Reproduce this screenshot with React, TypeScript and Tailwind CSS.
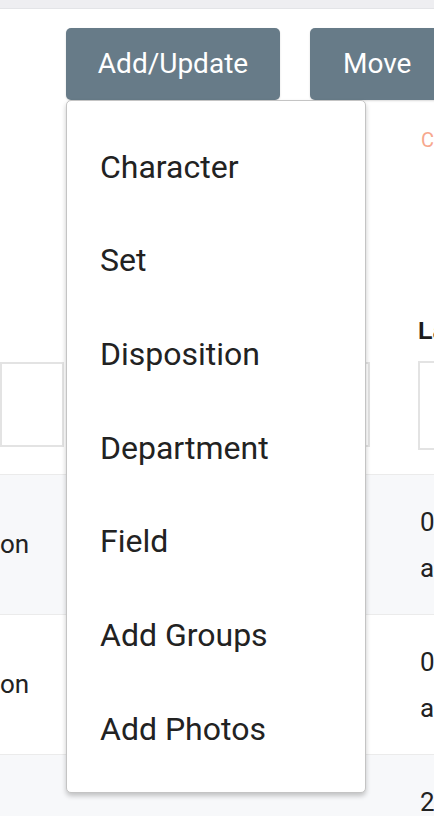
import React from 'react'

const MENU_ITEMS = ['Character', 'Set', 'Disposition', 'Department', 'Field', 'Add Groups', 'Add Photos']

const ROWS = [
  { left: 'on', right: ['0', 'a'], shaded: true },
  { left: 'on', right: ['0', 'a'], shaded: false },
  { left: '', right: ['2', ''], shaded: true },
]

function FilterInput({ className = '' }: { className?: string }) {
  return <div className={`border-2 border-[#e3e3e3] bg-white ${className}`} />
}

function AddUpdateMenu() {
  return (
    <div className="absolute left-[66px] top-[100px] z-10 w-[300px] rounded-[5px] border border-[#c4c4c4] bg-white pt-[19px] pb-[16px] shadow-[0_3px_5px_rgba(0,0,0,0.22)]">
      <ul className="flex flex-col">
        {MENU_ITEMS.map((item) => (
          <li key={item} className="flex h-[93.67px] items-center pl-[33px] text-[32px] text-[#222]">
            {item}
          </li>
        ))}
      </ul>
    </div>
  )
}

export default function App() {
  return (
    <div className="relative h-[816px] w-[434px] overflow-hidden bg-white font-['Roboto',sans-serif]">
      <div className="h-[9px] border-b border-[#e3e4e7] bg-[#eeeef1]" />

      <div className="flex gap-[30px] pl-[66px] pt-[19px]">
        <button
          type="button"
          className="h-[72px] w-[214px] shrink-0 rounded-[5px] bg-[#677b88] text-[28px] text-white shadow-[0_1px_2px_rgba(0,0,0,0.15)]"
        >
          Add/Update
        </button>
        <button
          type="button"
          className="h-[72px] w-[180px] shrink-0 rounded-[5px] bg-[#677b88] pl-[33px] text-left text-[28px] text-white shadow-[0_1px_2px_rgba(0,0,0,0.15)]"
        >
          Move
        </button>
      </div>

      <div className="flex h-[374px] w-[700px]">
        <div className="flex w-[64px] shrink-0 flex-col justify-end pb-[27px]">
          <FilterInput className="h-[85px]" />
        </div>
        <div className="ml-[26px] flex w-[280px] shrink-0 flex-col justify-end pb-[27px]">
          <FilterInput className="h-[85px]" />
        </div>
        <div className="ml-[48px] flex w-[260px] shrink-0 flex-col">
          <span className="mt-[26px] pl-[3px] text-[20px] leading-[28px] text-[#f7a88e]">Clear all</span>
          <span className="mt-[163px] font-['Liberation_Sans',sans-serif] text-[24px] leading-[28px] font-bold text-[#1c1c1c]">
            Last Updated
          </span>
          <FilterInput className="mt-[16px] h-[89px]" />
        </div>
      </div>

      <div className="w-[700px]">
        {ROWS.map((row, i) => (
          <div
            key={i}
            className={`flex h-[140px] items-center border-t border-[#ebebeb] text-[26px] text-[#222] ${
              row.shaded ? 'bg-[#f7f8fa]' : 'bg-white'
            }`}
          >
            <div className="w-[64px] shrink-0">{row.left}</div>
            <div className="ml-[26px] w-[280px] shrink-0" />
            <div className="ml-[50px] flex w-[200px] shrink-0 flex-col leading-[46px]">
              <span>{row.right[0]}</span>
              <span>{row.right[1] || '\u00a0'}</span>
            </div>
          </div>
        ))}
      </div>

      <AddUpdateMenu />
    </div>
  )
}
